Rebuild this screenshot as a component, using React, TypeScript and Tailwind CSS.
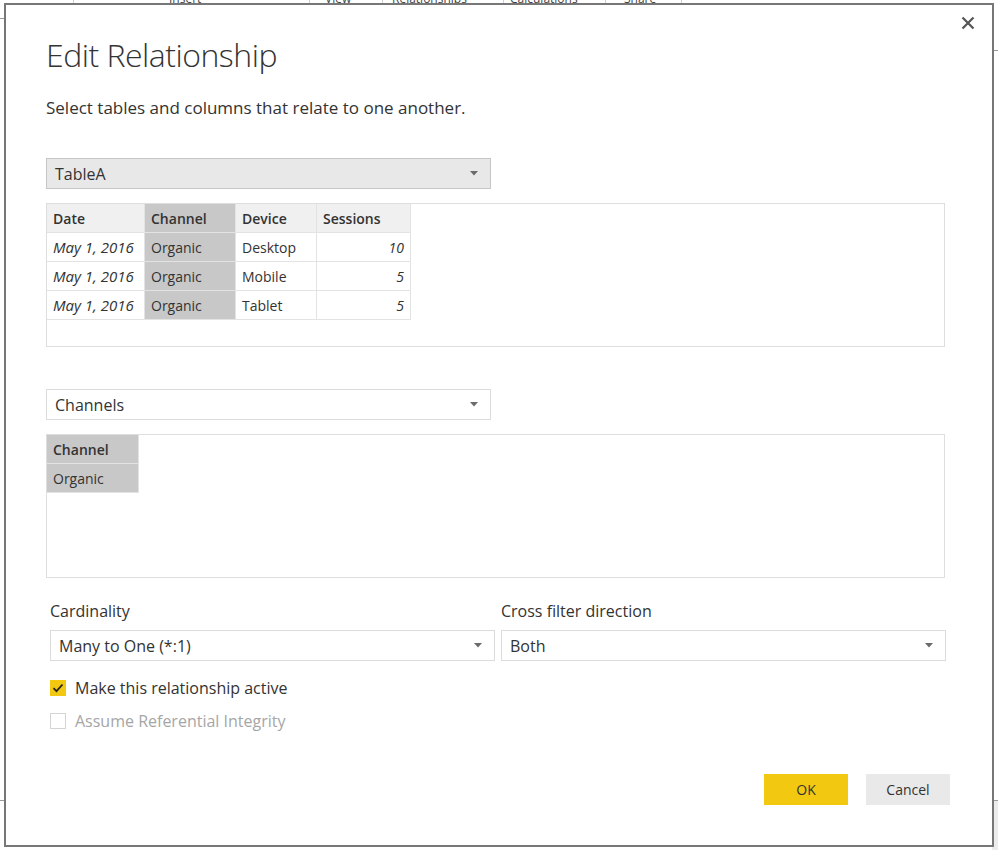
import React from "react";

const font = { fontFamily: '"Open Sans", "Noto Sans", Arial, sans-serif' };

function Arrow() {
  return (
    <svg width="8" height="5" viewBox="0 0 8 5" className="shrink-0">
      <path d="M0 0 L8 0 L4 4.5 Z" fill="#6b6b6b" />
    </svg>
  );
}

function Dropdown({ label, gray, width }: { label: string; gray?: boolean; width: string }) {
  return (
    <div
      className={`${width} h-[31px] flex items-center justify-between pl-[8px] pr-[12px] border ${
        gray ? "bg-[#e8e8e8] border-[#c6c6c6]" : "bg-white border-[#dcdcdc]"
      }`}
    >
      <span className="text-[16px] leading-[20px] text-[#333]">{label}</span>
      <Arrow />
    </div>
  );
}

const rows = [
  { d: "May 1, 2016", c: "Organic", dev: "Desktop", s: "10" },
  { d: "May 1, 2016", c: "Organic", dev: "Mobile", s: "5" },
  { d: "May 1, 2016", c: "Organic", dev: "Tablet", s: "5" },
];

export default function App() {
  return (
    <div className="relative w-[998px] h-[850px] bg-white overflow-hidden text-[#333]" style={font}>
      {/* background application ribbon remnants */}
      <div className="absolute left-0 top-[18px] w-[6px] h-px bg-[#9a9a9a]" />
      <div className="absolute left-0 top-[800px] w-[6px] h-px bg-[#9a9a9a]" />
      <div className="absolute right-0 top-[50px] w-[6px] h-px bg-[#9a9a9a]" />
      <div className="absolute right-0 top-[800px] w-[6px] h-[50px] bg-[#ececec] border-t border-[#9a9a9a]" />
      <div className="absolute left-[73px] top-0 w-px h-[12px] bg-[#d0d0d0]" />
      <div className="absolute left-[309px] top-0 w-px h-[12px] bg-[#d0d0d0]" />
      <div className="absolute left-[382px] top-0 w-px h-[12px] bg-[#d0d0d0]" />
      <div className="absolute left-[503px] top-0 w-px h-[12px] bg-[#d0d0d0]" />
      <div className="absolute left-[605px] top-0 w-px h-[12px] bg-[#d0d0d0]" />
      <div className="absolute left-[681px] top-0 w-px h-[12px] bg-[#d0d0d0]" />
      <div className="absolute top-[-8px] left-0 h-[14px] text-[12px] leading-[14px] text-[#444]">
        <span className="absolute left-[169px]">Insert</span>
        <span className="absolute left-[325px]">View</span>
        <span className="absolute left-[392px]">Relationships</span>
        <span className="absolute left-[510px]">Calculations</span>
        <span className="absolute left-[624px]">Share</span>
      </div>

      {/* dialog */}
      <div className="absolute left-[4px] top-[3px] w-[990px] h-[844px] border-2 border-[#777] bg-white">
        <button className="absolute right-[17px] top-[11px] w-[14px] h-[14px] flex items-center justify-center">
          <svg width="14" height="14" viewBox="0 0 14 14">
            <path d="M1.5 1.5 L12.5 12.5 M12.5 1.5 L1.5 12.5" stroke="#555" strokeWidth="2.2" />
          </svg>
        </button>

        <div className="pl-[40px] pt-[28px] flex flex-col">
          <h1 className="text-[32px] font-light leading-[44px] text-[#333] tracking-[-0.5px]">Edit Relationship</h1>
          <p className="mt-[21px] text-[17px] leading-[20px] text-[#333]">
            Select tables and columns that relate to one another.
          </p>

          <div className="mt-[40px]">
            <Dropdown label="TableA" gray width="w-[445px]" />
          </div>

          <div className="mt-[14px] w-[899px] h-[144px] border border-[#dedede] bg-white">
            <div className="flex flex-col w-fit text-[14px]">
              <div className="flex h-[29px] font-semibold">
                <div className="w-[98px] bg-[#f0f0f0] border-r border-b border-[#e3e3e3] pl-[6px] flex items-center">Date</div>
                <div className="w-[91px] bg-[#c8c8c8] border-r border-b border-[#e3e3e3] pl-[6px] flex items-center">Channel</div>
                <div className="w-[81px] bg-[#f0f0f0] border-r border-b border-[#e3e3e3] pl-[6px] flex items-center">Device</div>
                <div className="w-[94px] bg-[#f0f0f0] border-r border-b border-[#e3e3e3] pl-[6px] flex items-center">Sessions</div>
              </div>
              {rows.map((r, i) => (
                <div key={i} className="flex h-[29px]">
                  <div className="w-[98px] border-r border-b border-[#e3e3e3] pl-[6px] flex items-center italic text-[15px]">{r.d}</div>
                  <div className="w-[91px] bg-[#c8c8c8] border-r border-b border-[#e3e3e3] pl-[6px] flex items-center">{r.c}</div>
                  <div className="w-[81px] border-r border-b border-[#e3e3e3] pl-[6px] flex items-center">{r.dev}</div>
                  <div className="w-[94px] border-r border-b border-[#e3e3e3] pr-[6px] flex items-center justify-end italic">{r.s}</div>
                </div>
              ))}
            </div>
          </div>

          <div className="mt-[42px]">
            <Dropdown label="Channels" width="w-[445px]" />
          </div>

          <div className="mt-[14px] w-[899px] h-[144px] border border-[#dedede] bg-white">
            <div className="flex flex-col w-fit text-[14px]">
              <div className="w-[92px] h-[29px] bg-[#c8c8c8] border-r border-b border-[#e3e3e3] pl-[6px] flex items-center font-semibold">Channel</div>
              <div className="w-[92px] h-[29px] bg-[#c8c8c8] border-r border-b border-[#e3e3e3] pl-[6px] flex items-center">Organic</div>
            </div>
          </div>

          <div className="mt-[23px] pl-[4px] flex gap-[6px]">
            <div className="flex flex-col w-[445px]">
              <span className="text-[16px] leading-[20px]">Cardinality</span>
              <div className="mt-[9px]">
                <Dropdown label="Many to One (*:1)" width="w-[445px]" />
              </div>
            </div>
            <div className="flex flex-col w-[445px]">
              <span className="text-[16px] leading-[20px]">Cross filter direction</span>
              <div className="mt-[9px]">
                <Dropdown label="Both" width="w-[445px]" />
              </div>
            </div>
          </div>

          <div className="mt-[17px] pl-[4px] flex items-center gap-[9px] h-[20px]">
            <div className="w-[16px] h-[16px] bg-[#f2c811] flex items-center justify-center">
              <svg width="12" height="10" viewBox="0 0 12 10">
                <path d="M1.5 5.2 L4.5 8.2 L10.5 1.5" stroke="#252423" strokeWidth="1.8" fill="none" />
              </svg>
            </div>
            <span className="text-[16px] leading-[20px]">Make this relationship active</span>
          </div>

          <div className="mt-[13px] pl-[4px] flex items-center gap-[9px] h-[20px]">
            <div className="w-[16px] h-[16px] bg-white border border-[#d4d4d4]" />
            <span className="text-[16px] leading-[20px] text-[#a6a6a6]">Assume Referential Integrity</span>
          </div>

          <div className="mt-[43px] w-[904px] flex justify-end gap-[18px]">
            <button className="w-[84px] h-[31px] bg-[#f2c811] text-[14px] text-[#333]">OK</button>
            <button className="w-[84px] h-[31px] bg-[#e9e9e9] text-[14px] text-[#333]">Cancel</button>
          </div>
        </div>
      </div>
    </div>
  );
}
